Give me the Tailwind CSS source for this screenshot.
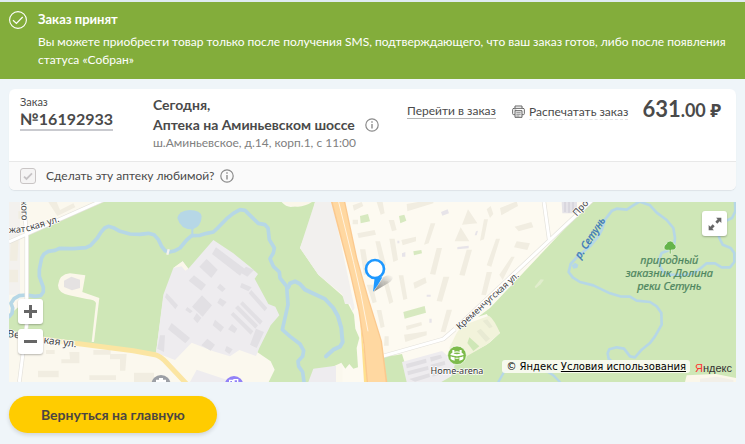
<!DOCTYPE html>
<html lang="ru">
<head>
<meta charset="utf-8">
<meta name="viewport" content="width=device-width, initial-scale=1">
<title>Заказ принят</title>
<script src="https://cdn.jsdelivr.net/npm/@tailwindcss/browser@4"></script>
</head>
<body class="min-h-screen bg-[#eff5f9] font-['Lato','Noto_Sans',sans-serif] text-xs text-[#4a4a4a]">

<section class="flex gap-[11px] border-t-2 border-[#dfebf1] bg-[#83ad3b] pt-2 pr-4 pb-[10px] pl-[9px] text-white" role="status">
  <svg class="mt-px size-[18px] shrink-0" viewBox="0 0 18 18" fill="none" stroke="currentColor" aria-hidden="true">
    <circle cx="9" cy="9" r="8.4" stroke-width="1.1"/>
    <path d="M4 9.3 7.4 12.5 13.7 6" stroke-width="1.2"/>
  </svg>
  <div>
    <h1 class="text-[13px] leading-[18px] font-bold">Заказ принят</h1>
    <p class="mt-[5px] leading-[18px]">Вы можете приобрести товар только после получения SMS, подтверждающего, что ваш заказ готов, либо после появления статуса «Собран»</p>
  </div>
</section>

<main class="px-[9px] pt-[10px] pb-[10px]">
  <article class="overflow-hidden rounded-md bg-white shadow-[0_1px_1px_#dde3e7]">
    <div class="flex items-start pt-[6px] pr-[15px] pb-[10px] pl-[11px]">
      <div class="w-[133px] shrink-0">
        <div class="text-[11px] leading-[14px]">Заказ</div>
        <a href="#order" class="inline-block border-b-2 border-[#c9cacf] text-base leading-5 font-bold">№16192933</a>
      </div>
      <div class="min-w-0 flex-1">
        <h2 class="text-sm leading-5 font-bold">Сегодня,<br>
          <span class="flex items-center gap-[10px]"><span class="whitespace-nowrap">Аптека на Аминьевском шоссе</span>
            <button type="button" aria-label="Об аптеке" class="text-[#8b8b8b]">
              <svg class="size-[14px]" viewBox="0 0 14 14" fill="none" stroke="currentColor"><circle cx="7" cy="7" r="6.2" stroke-width="1.2"/><path d="M7 6v4.6M7 3.3v1.4" stroke-width="1.4"/></svg>
            </button>
          </span>
        </h2>
        <p class="leading-4 whitespace-nowrap text-[#808080]">ш.Аминьевское, д.14, корп.1, с 11:00</p>
      </div>
      <div class="flex shrink-0 items-center">
        <a href="#order" class="mt-1 border-b border-[#b5b5b5] leading-[14px]">Перейти в заказ</a>
        <button type="button" class="mt-1 ml-4 flex items-center gap-1">
          <svg class="size-[13px]" viewBox="0 0 39 39" fill="none" stroke="#666" stroke-width="3" aria-hidden="true">
            <path d="M9 10V3h21v7M9 29H5q-3 0-3-3V14q0-4 4-4h27q4 0 4 4v12q0 3-3 3h-4"/>
            <path d="M9 17h21v20H9z" fill="#eee"/><path d="M13 23h13M13 28h13M13 33h9M7 15h6" stroke-width="2"/>
          </svg>
          <span class="border-b border-dashed border-[#e4e4e4] leading-[15px]">Распечатать заказ</span>
        </button>
        <div class="ml-[14px] text-[22px] leading-7 font-bold whitespace-nowrap">631<span class="text-lg">.00 ₽</span></div>
      </div>
    </div>
    <div class="flex items-center border-t border-[#e8e8e8] bg-[#fafafa] py-[6px] pl-[11px]">
      <span class="relative flex size-4">
        <input id="favorite" type="checkbox" checked class="peer size-4 appearance-none rounded-[3px] border border-[#c9c5c5] bg-[#f5f4f4]">
        <svg class="pointer-events-none absolute inset-0 hidden size-4 peer-checked:block" viewBox="0 0 16 16" fill="none" stroke="#c6c3c5" stroke-width="1.8" aria-hidden="true"><path d="m4 8.6 2.5 2.4L12 5.4"/></svg>
      </span>
      <label for="favorite" class="ml-[10px] leading-4">Сделать эту аптеку любимой?</label>
      <button type="button" aria-label="О любимой аптеке" class="ml-[6px] text-[#8b8b8b]">
        <svg class="size-[14px]" viewBox="0 0 14 14" fill="none" stroke="currentColor"><circle cx="7" cy="7" r="6.2" stroke-width="1.2"/><path d="M7 6v4.6M7 3.3v1.4" stroke-width="1.4"/></svg>
      </button>
    </div>
  </article>

  <section class="relative mt-3 h-[180px] overflow-hidden bg-[#fdfaf1]" aria-label="Карта">
    <svg class="block size-full font-['Noto_Sans',sans-serif]" viewBox="27 12 2181 540" preserveAspectRatio="xMidYMid slice">
      <path fill="#fbf8ee" d="M27 12h1000v540H27z"/>
      <path fill="#f3f1ee" d="M27 12H60V290H27z"/>
      <!-- parks -->
      <path fill="#cfe7b7" d="M86 108 310 12H845Q865 35 890 22T945 12L935 60 900 150 955 230 1035 300 1062 350 1066 392 1078 420 1070 450 1074 508 1060 512 1048 498 1036 512 1024 494 990 510 930 552H806L824 515 812 490 768 460 690 300H490L468 464 130 420 27 396V352L86 300Z"/>
      <path fill="#f2f0ee" d="M945 12H996L1064 330 1058 340 1050 318 1035 318 1026 288 955 230 900 150Z"/>
      <path fill="#fbf7ea" d="M850 12h86q-20 13-42 14t-44-14z"/>
      <!-- industrial district -->
      <path fill="#eeecef" d="M640 126 700 166 750 206 774 228 764 242 805 318 826 326 838 352 812 382 778 450 768 474 718 456 690 475 640 460 575 434 525 486 468 464 490 290 520 210 548 190 565 212Z"/>
      <path fill="#eeecef" d="M590 515 700 552H570ZM940 512 1008 503V552H925Z"/>
      <path fill="#fbf7ea" d="M520 210 548 190 565 212 556 218 545 205Z"/>
      <g fill="#e2e0e4">
        <path d="M648 148 734 212 720 233 636 168ZM620 183 653 215 634 240 598 206ZM582 232 618 260 604 278 566 248ZM660 257 677 272 667 282 651 269ZM606 292 636 322 608 356 576 326ZM500 285 534 322 526 334 495 298ZM660 300 680 312 668 326 652 314ZM515 375 570 420 556 436 504 394ZM590 345 604 360 592 376 580 362ZM562 327 578 340 570 346 556 336ZM480 412H495L492 462 472 452ZM622 422 645 440 632 458 604 442ZM645 365 672 388 662 402 638 382ZM680 444 698 454 688 468 674 458ZM696 378 712 392 704 406 684 394Z"/>
        <path d="M692 350 700 342 760 400 752 410ZM705 330 714 322 774 382 766 392ZM720 318 728 310 788 370 780 380ZM746 286 754 276 802 330 794 340ZM768 392 792 402 770 450 750 440ZM738 206 762 216 742 236 722 224ZM725 255 755 268 745 280 720 268Z"/>
      </g>
      <!-- clearing with access road -->
      <path fill="#fbf7ea" d="M256 232 247 282 298 300 282 432H275L288 315Q285 305 260 303L208 292Q174 285 174 262 178 228 210 226Z"/>
      <path fill="#e5e2e2" d="m192 248 22-12 26 9v25l-24 7-24-10z"/>
      <!-- pond and rivers -->
      <path fill="#b6d7e6" d="M532 60q5-22 37-24 34 0 36 20-1 28-26 38-37 2-47-34z"/>
      <g fill="none" stroke="#b6d7e6" stroke-linecap="round" stroke-linejoin="round">
        <path stroke-width="11" d="M27 356 36 346 38 330 33 316 42 302 58 293 80 291 105 295 122 293 130 282 130 268 118 235 118 215 125 180 132 168 145 160 165 157 178 151 220 152 258 149 272 142 292 120 302 104 314 90 325 85 340 89 360 100 390 108 420 109 445 106 462 110 475 125 485 145 495 158 508 162 525 158 540 150 560 126 575 113 600 112 620 106 640 102 655 88 680 62 700 46 720 35 735 37 750 52 775 76 795 80 804 90 808 125 823 150 820 165 810 182 820 205 838 222 840 240 860 265 864 320 847 395 870 415 900 438 911 458 908 475 894 490 896 505 908 522 912 552"/>
        <path stroke-width="12" d="M865 268 870 256 885 250 900 258 915 275 975 303 1000 330 1014 355 1024 390 1026 415 1028 432 1020 446 1000 455 978 475"/>
        <path stroke-width="6" d="M577 90v25"/>
      </g>
      <path stroke="#f4f2ef" stroke-width="7" d="m506 154-4 16"/>
      <!-- right bank -->
      <path fill="#cfe7b7" d="M1770 12H2208V552H1220L1215 520 1205 475 1152 480V470L1350 420 1470 330Z"/>
      <path fill="#fdfaf1" d="M1150 470 1330 425 1395 370 1460 348 1500 405 1470 433 1370 520 1260 552H1215L1204 475Z"/>
      <path fill="#cfe7b7" d="M1148 480 1206 468 1222 520V552H1160ZM1225 552 1340 505 1470 434V552Z"/>
      <path fill="#f2f3db" d="m1348 450 22-45q10-18 32-28l65-24q15 10 33 52l-40 35-90 52z"/>
      <path fill="#cfe7b7" d="m1408 418 30 27-18 14-18-24z"/>
      <path fill="#e8ead3" d="m1430 400 12-8 28 30-12 10zM1448 368l14-4 16 22-10 5z"/>
      <path fill="#eeecef" d="m1206 492 120-33 40 36-12 40-30 17H1220z"/>
      <path fill="#e0dee2" d="m1218 498 60-16 2 12-60 17zM1222 520l62-16 2 11-62 17zM1228 543l60-17 2 11-45 14zM1290 478l32-8 5 10-34 11zM1292 500l42-11 2 11-43 12zM1296 525l34-9 2 10-34 10z"/>
      <path fill="#fbf7ea" d="M2055 552 2060 532 2148 528 2208 540V552Z"/>
      <path fill="#f2efe8" d="m2100 542 50-6 50 10v6h-100z"/>
      <g fill="none" stroke="#b6d7e6" stroke-linecap="round" stroke-linejoin="round">
        <path stroke-width="8" d="M1916 12 1900 22 1880 35 1850 32 1836 38 1815 65 1806 95 1795 115 1770 145 1730 178 1712 198 1706 222 1718 238 1740 252 1780 262 1830 286 1860 295 1890 296 1910 308 1950 312 1970 325 1984 345 1985 380 1965 415 1950 435 1925 455 1905 478 1890 475 1872 452 1850 448 1828 454 1823 466 1826 482 1842 496 1852 512"/>
        <path stroke-width="8" d="M1922 12 1950 22 1970 44 2000 66 2020 90 2025 120 2022 142 2010 155 1985 165 1977 185 1980 205 1990 222 2010 230 2050 231 2080 226 2100 212 2120 196 2145 196 2165 208 2190 208 2203 192 2203 165 2192 150 2168 140 2158 120 2154 100M2205 12 2206 40 2196 60 2180 68"/>
        <path stroke-width="7" d="M1495 552 1512 522 1535 506 1580 503M1640 520 1660 532 1680 552"/>
      </g>
      <path fill="#b6d7e6" d="m1715 202 10-8 10 6-3 10-12 2z"/>
      <path fill="#e0edcc" d="m1604 266 18-22 10 1-10 14-15 12z"/>
      <!-- buildings -->
      <g fill="#f1ede1">
        <path d="M32 122h24l-4 66H30zM28 215h26v38H28zM55 40h20v22H55zM145 12h25l10 24 40-20 6 12-54 26zM280 456h52v14h-52zM208 462h30v34h-54v-12h26zM330 468h50l-4 50h-16v-34h-30zM114 518h62v20h-62zM268 532h80v14h-80zM402 524h60v28h-60zM138 456h26v12h-26z"/>
        <path d="M1058 22 1085 12 1090 24 1062 38ZM1058 65h16v14h-16zM1072 106 1124 96 1128 110 1076 120ZM1130 12h18l6 34-12 4zM1166 66h16l8 30-14 4zM1080 154h16l12 70-16 8zM1126 130h14l18 70-14 10zM1168 122h16l10 64-14 6zM1100 260h18l12 52-12 4zM1150 250h14l16 62-12 6zM1196 232h14l12 70-12 4zM1130 336h14l10 50-12 4zM1154 415h12v28h-14zM1204 126l44-10v14l-40 12zM1240 254l36-16 4 16-36 18zM1292 76h14l-20 60-14 4zM1310 150h16l-20 80-16-2zM1330 236h18l-22 75-16-2zM1400 155h16l-22 78-16-2zM1340 335h16l-20 68-14-2zM1220 18l80-14v12l-78 24zM1404 34 1432 76 1386 80ZM1382 88 1408 130 1364 130ZM1218 384 1264 372 1266 382 1220 396ZM1212 410 1280 400V412L1216 432ZM1488 122h12l-26 84-14-4zM1460 222h16l-18 70-14-2zM1452 64h12l-12 60-12 4zM1500 30l50-20 4 14-50 28zM1544 86l50-14 6 16-44 12zM1498 230l36-54h10l-36 70zM1550 130l40 6-8 20-40-8zM1460 34l12-10 8 24-10 12z"/>
      </g>
      <g fill="#e7e4e9"><path d="m1323 42 20-8 4 12-20 7zM1206 166l10-4v14h-10zM1428 100l6-2-4 14h-6zM1372 147l34-4v8l-34 3zM1280 290h12v6h-12zM1288 362h7v12h-7zM1192 128h6v8h-6z"/></g>
      <g fill="#d7e9c0"><path d="m1080 54 24-6 6 22-28 6zM1197 54l16-4 6 18-18 8zM1240 160l24-4 2 10-24 6zM1210 342l64-18 4 20-64 18z"/></g>
      <path fill="#e5e3e8" d="M1685 12h46v34h-44z"/>
      <path stroke="#d4d1da" stroke-width="4" d="M1695 12v30m12-30v32m12-32v32"/>
      <!-- roads -->
      <g fill="none" stroke-linejoin="round">
        <path stroke="#e4e2dc" stroke-width="13" d="M70 12 80 108V380L58 552M27 132 310 6M1150 474 1330 423 1365 393M1632 12 1648 128M1370 388 1784 0"/>
        <path stroke="#fff" stroke-width="9" d="M70 12 80 108V380L58 552M27 132 310 6M1150 474 1330 423 1365 393M1632 12 1648 128M1370 388 1784 0"/>
        <path stroke="#fbe5a2" stroke-width="15" d="M225 436 400 458 465 470Q482 475 500 494L560 558"/>
        <path stroke="#fdf0cc" stroke-width="14" d="M27 409 225 436"/>
      </g>
      <path fill="#ffe08e" d="M1080 360 1104 552H1092Z"/>
      <path fill="#fbc98f" d="M993 12H1036L1072 180 1106 300 1146 430 1162 552H1100L1090 440 1075 340 1050 230Z"/>
      <path fill="#ffd8a1" d="M998 12H1032L1068 180 1102 300 1142 430 1157 552H1104L1094 440 1079 340 1054 230Z"/>
      <path fill="none" stroke="#fff3df" stroke-width="3" d="M1016 12 1060 190 1083 290 1104 400"/>
      <!-- street and place names -->
      <g fill="#444" stroke="#fff" stroke-width="4" paint-order="stroke" stroke-linejoin="round" font-size="28">
        <text transform="translate(63 8) rotate(88)">кого</text>
        <text transform="translate(27 105) rotate(-3)">жат</text>
        <text transform="translate(80 101) rotate(-17)">ская ул.</text>
        <text font-size="31" transform="translate(21 417) rotate(7)">Ве</text>
        <text font-size="31" transform="translate(130 436) rotate(7)">кая ул.</text>
        <text font-size="27" transform="translate(1379 396) rotate(-42)">Кременчугская ул.</text>
        <text transform="translate(1730 56) rotate(-47)">Про</text>
      </g>
      <text transform="translate(1741 184) rotate(-57)" font-size="31" font-style="italic" fill="#3a78b8" stroke="#3a78b8">р. Сетунь</text>
      <g fill="#4e8660" stroke="#4e8660" stroke-width=".7" font-size="33" font-style="italic" text-anchor="middle">
        <text x="2008" y="199">природный</text><text x="2008" y="237">заказник Долина</text><text x="2008" y="275">реки Сетунь</text>
      </g>
      <path fill="#65b44a" stroke="#eff8e8" stroke-width="2" d="M2008 168V156Q1992 160 1992 147 1994 139 1999 138 2000 129 2011 129 2022 130 2022 138 2030 141 2028 150 2024 158 2013 156V168Z"/>
      <!-- sports arena -->
      <circle cx="1371" cy="472" r="28" fill="#7dbb4b" stroke="#fff" stroke-width="2"/>
      <g fill="#fff">
        <path d="M1357 456h6v5q8-3 16 0v-5h6v8q6 2 6 7-20 7-40 0 0-5 6-7z"/>
        <path d="M1352 475q5 3 12 3v10q-9-1-12-5zM1390 475q-5 3-12 3v10q9-1 12-5zM1366 479h10v3h-10z"/>
      </g>
      <ellipse cx="1371" cy="466" rx="10" ry="2.500" fill="#7dbb4b"/>
      <text x="1371" y="529" font-size="27" text-anchor="middle" fill="#333" stroke="#fff" stroke-width="4" paint-order="stroke">Home-arena</text>
      <!-- partly visible places -->
      <circle cx="483" cy="560" r="29" fill="#9c9fa5"/><path fill="#fff" d="M468 552v-7h9v-5h12v5h9v7z"/>
      <circle cx="702" cy="562" r="28" fill="#9282f7"/><path fill="none" stroke="#fff" stroke-width="4" d="M689 552v-5h9v5m4 0v-7h11v7"/>
      <!-- pharmacy pin -->
      <defs><linearGradient id="pin-shadow" x1="0" y1="1" x2="1" y2="0"><stop stop-color="#555" stop-opacity=".8"/><stop offset="1" stop-color="#777" stop-opacity="0"/></linearGradient></defs>
      <path fill="url(#pin-shadow)" d="M1121 281 1150 238Q1165 226 1178 236 1180 246 1164 256Z"/>
      <path fill="#1e98ff" d="M1119 281 1124 238H1147Q1135 262 1119 281Z"/>
      <circle cx="1125" cy="213" r="27" fill="#fff" stroke="#1e98ff" stroke-width="8"/>
    </svg>

    <div class="absolute top-[97px] left-[9px] flex flex-col gap-[5px]">
      <button type="button" aria-label="Приблизить" class="grid size-[25px] place-items-center rounded-[3px] bg-white shadow-[0_1px_2px_#0004]"><svg class="size-[13px]" viewBox="0 0 13 13" stroke="#666" stroke-width="3"><path d="M0 6.5h13M6.5 0v13"/></svg></button>
      <button type="button" aria-label="Отдалить" class="grid size-[25px] place-items-center rounded-[3px] bg-white shadow-[0_1px_2px_#0004]"><svg class="size-[13px]" viewBox="0 0 13 13" stroke="#666" stroke-width="3"><path d="M0 6.5h13"/></svg></button>
    </div>
    <button type="button" aria-label="На весь экран" class="absolute top-[9px] right-[9px] grid size-[25px] place-items-center rounded-[3px] bg-white shadow-[0_1px_2px_#0004]">
      <svg class="size-[14px]" viewBox="0 0 42 42" fill="#666"><path d="M24 2H40V18L35 13 28 20 22 14 29 7ZM2 24 7 29 14 22 20 28 13 35 18 40H2Z"/></svg>
    </button>
    <div class="absolute right-1 bottom-1 flex items-end gap-[5px]">
      <div class="mb-[5px] rounded-[3px] bg-[#f9fbf3]/90 px-1 font-['DejaVu_Sans','Liberation_Sans',sans-serif] text-[10px] leading-[13px] whitespace-nowrap text-black">© Яндекс <a href="#terms" class="underline">Условия использования</a></div>
      <a href="#yandex" class="font-['Liberation_Sans',sans-serif] text-[11px] leading-5 text-[#333]"><span class="text-[#f33]">Я</span>ндекс</a>
    </div>
  </section>

  <button type="button" class="mt-[14px] h-[37px] rounded-full bg-[#ffcc00] px-8 text-sm font-bold text-[#4c4642] shadow-[0_2px_4px_#0002]">Вернуться на главную</button>
</main>
</body>
</html>
